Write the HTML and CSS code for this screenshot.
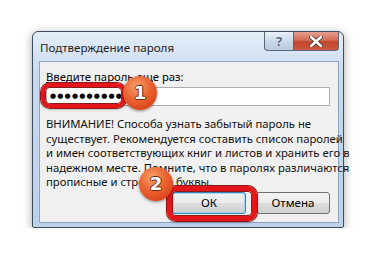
FILE: index.html
```html
<!DOCTYPE html>
<html lang="ru">
<head>
    <meta charset="UTF-8">
    <title>Подтверждение пароля</title>
    <link rel="stylesheet" href="styles.css">
</head>
<body>
    <div class="window">
        <div class="titlebar">
            <span class="title">Подтверждение пароля</span>
            <div class="caption-buttons">
                <div class="cap-btn help">?</div>
                <div class="cap-btn close">
                    <svg width="14" height="11" viewBox="0 0 14 11">
                        <path d="M2 1 L12 10 M12 1 L2 10" stroke="#3a3a3a" stroke-width="4" stroke-linecap="round"/>
                        <path d="M2 1 L12 10 M12 1 L2 10" stroke="#ffffff" stroke-width="2.4" stroke-linecap="round"/>
                    </svg>
                </div>
            </div>
        </div>

        <div class="panel">
            <label class="label" for="pass"><u>В</u>ведите пароль еще раз:</label>
            <div class="input" id="pass">●●●●●●●●●●</div>
            <p class="warning">
                ВНИМАНИЕ! Способа узнать забытый пароль не<br>
                существует. Рекомендуется составить список паролей<br>
                и имен соответствующих книг и листов и хранить его в<br>
                надежном месте. Помните, что в паролях различаются<br>
                прописные и строчные буквы.
            </p>
            <div class="buttons">
                <button class="btn default">ОК</button>
                <button class="btn">Отмена</button>
            </div>
        </div>

        <!-- пометки поверх окна -->
        <div class="mark mark-input"></div>
        <div class="badge badge-1">1</div>
        <div class="mark mark-ok"></div>
        <div class="badge badge-2">2</div>
    </div>
</body>
</html>
```

FILE: styles.css
```css
body {
    margin: 0;
    background-color: #ffffff;
    font-family: "Noto Sans", "Open Sans", sans-serif;
    font-size: 11.3px;
    color: #000;
}
.window {
    position: relative;
    box-sizing: border-box;
    width: 312px;
    height: 197px;
    margin: 31px 0 0 32px;
    padding: 0 4px 4px 6px;
    border: 1px solid #3e4c5e;
    border-radius: 6px 6px 2px 2px;
    background: linear-gradient(#e4eef9, #c6d9ef 45px, #bcd2eb);
    box-shadow: 0 2px 10px rgba(0, 0, 0, 0.35);
}
.titlebar {
    display: flex;
    justify-content: space-between;
    height: 29px;
}
.title {
    padding: 8px 0 0 1px;
    font-size: 11.6px;
    color: #1e1e1e;
}
.caption-buttons {
    display: flex;
    height: 19px;
}
.cap-btn {
    display: flex;
    align-items: center;
    justify-content: center;
    box-sizing: border-box;
    height: 19px;
    border: 1px solid #5b6777;
    border-top: none;
}
.help {
    width: 29px;
    border-right: none;
    border-radius: 0 0 0 4px;
    background: linear-gradient(#e9f0f8, #cbd9ea 50%, #b9cbe0);
    color: #5b6777;
    font-weight: bold;
    font-size: 13px;
    text-shadow: 0 0 1px #fff;
}
.close {
    width: 46px;
    border-radius: 0 0 4px 0;
    background: linear-gradient(#e3a091, #d46a55 45%, #c0462c 55%, #cc5a40);
}
.panel {
    box-sizing: border-box;
    height: 162px;
    padding: 7px 8px 0 6px;
    border: 1px solid #8ea3bc;
    background-color: #f0f0f0;
}
.label {
    display: block;
    line-height: 16px;
}
.input {
    box-sizing: border-box;
    height: 19px;
    margin-top: 2px;
    padding: 0 0 0 3px;
    border: 1px solid #abadb3;
    background-color: #fff;
    font-family: "DejaVu Sans", sans-serif;
    font-size: 7px;
    letter-spacing: 1.2px;
    line-height: 17px;
}
.warning {
    margin: 11px 0 0;
    line-height: 14.5px;
    white-space: nowrap;
    color: #111;
}
.buttons {
    display: flex;
    justify-content: flex-end;
    gap: 10px;
    margin-top: 2px;
}
.btn {
    box-sizing: border-box;
    width: 74px;
    height: 22px;
    padding: 0;
    border: 1px solid #707070;
    border-radius: 3px;
    background: linear-gradient(#f2f2f2, #ebebeb 50%, #dddddd 51%, #cfcfcf);
    font-family: "Noto Sans", "Open Sans", sans-serif;
    font-size: 11.6px;
    color: #000;
}
.btn.default {
    border-color: #3c7fb1;
    box-shadow: inset 0 0 0 1px #9fd8f4;
}
.mark {
    position: absolute;
    box-sizing: border-box;
    border: 4px solid #e5161b;
    border-radius: 9px;
    box-shadow: 0 0 0 1px #8c1c1c, inset 0 0 0 1px #8c1c1c, 0 1px 3px rgba(0, 0, 0, 0.4);
}
.mark-input {
    left: 8px;
    top: 51px;
    width: 85px;
    height: 25px;
}
.mark-ok {
    left: 134px;
    top: 154px;
    width: 90px;
    height: 35px;
    border-width: 5px;
}
.badge {
    position: absolute;
    width: 34px;
    height: 34px;
    border-radius: 50%;
    background: radial-gradient(circle at 40% 30%, #f7a06a, #ea6230 45%, #d8421a 80%, #b8330f);
    box-shadow: 0 1px 3px rgba(0, 0, 0, 0.45);
    color: #fff;
    font-family: "DejaVu Sans", sans-serif;
    font-weight: bold;
    font-size: 18px;
    line-height: 34px;
    text-align: center;
    text-shadow: 1px 0 0 #6b2a12, -1px 0 0 #6b2a12, 0 1px 0 #6b2a12, 0 -1px 0 #6b2a12;
}
.badge-1 {
    left: 90px;
    top: 44px;
}
.badge-2 {
    left: 106px;
    top: 135px;
}
```
